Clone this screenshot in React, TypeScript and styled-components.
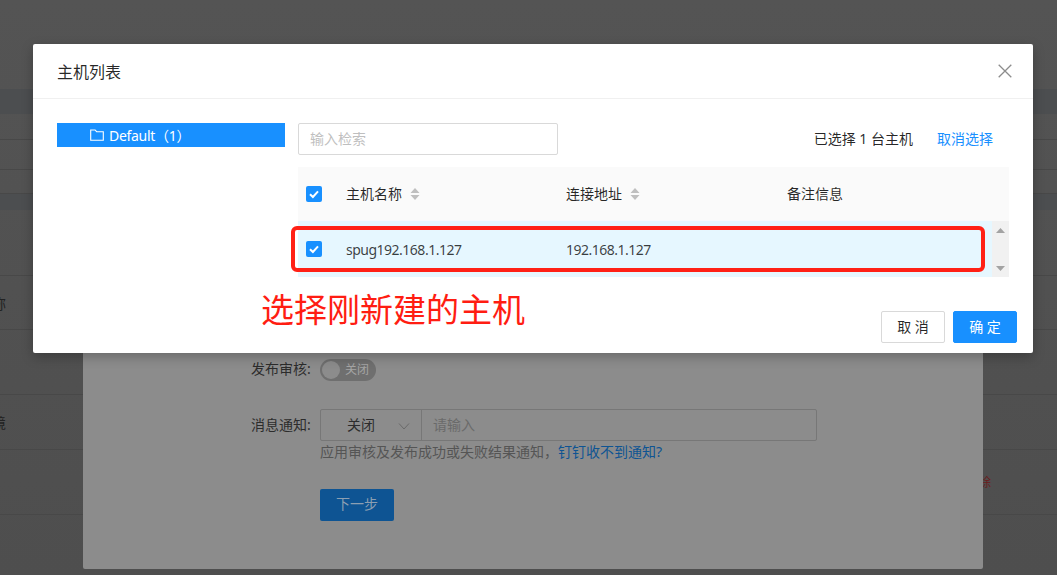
import styled, { createGlobalStyle } from "styled-components";

const Global = createGlobalStyle`
  html, body { margin: 0; padding: 0; background: #505050; }
  * { box-sizing: border-box; }
  body { font-family: "Noto Sans", "Noto Sans CJK SC", sans-serif; font-size: 14px; }
`;

const Page = styled.div`
  position: relative;
  width: 1057px;
  height: 575px;
  overflow: hidden;
  background: linear-gradient(#545454, #4e4e4e);
`;

/* table of the page under both dialogs */
const BackTable = styled.div`
  display: flex;
  flex-direction: column;
  padding-top: 89px;
`;

const BackRow = styled.div<{ $h: number; $band?: boolean }>`
  height: ${(p) => p.$h}px;
  display: flex;
  align-items: center;
  justify-content: space-between;
  font-size: 14px;
  color: #222;
  border-bottom: ${(p) => (p.$band ? "none" : "1px solid #484848")};
  background: ${(p) => (p.$band ? "#4c4e50" : "transparent")};
`;

const BackLabel = styled.span`
  margin-left: -8px;
`;

const BackDanger = styled.span`
  margin-right: 66px;
  font-size: 12px;
  color: #6b1d1d;
`;

const FormCard = styled.div`
  position: absolute;
  left: 83px;
  top: 200px;
  width: 900px;
  height: 369px;
  border-radius: 2px;
  background: #8c8c8c;
  padding: 159px 0 0 168px;
`;

const FormRow = styled.div<{ $mb: number }>`
  display: flex;
  margin-bottom: ${(p) => p.$mb}px;
`;

const FormLabel = styled.label<{ $h: number }>`
  width: 69px;
  height: ${(p) => p.$h}px;
  line-height: ${(p) => p.$h}px;
  color: #2c2c2c;
  white-space: nowrap;
`;

const Toggle = styled.div`
  position: relative;
  width: 56px;
  height: 22px;
  border-radius: 11px;
  background: #6f6f6f;
  color: #a5a5a5;
  font-size: 12px;
  line-height: 22px;
  padding-left: 25px;
  &::before {
    content: "";
    position: absolute;
    left: 2px;
    top: 2px;
    width: 18px;
    height: 18px;
    border-radius: 50%;
    background: #8c8c8c;
  }
`;

const InputGroup = styled.div`
  display: flex;
  width: 497px;
  height: 32px;
  border: 1px solid #777;
  border-radius: 2px;
`;

const GroupSelect = styled.div`
  position: relative;
  width: 101px;
  border-right: 1px solid #777;
  line-height: 30px;
  padding-left: 26px;
  color: #2c2c2c;
  svg {
    position: absolute;
    right: 11px;
    top: 10px;
  }
`;

const GroupInput = styled.div`
  flex: 1;
  padding-left: 11px;
  line-height: 30px;
  color: #6a6a6a;
`;

const FormHint = styled.div`
  height: 22px;
  line-height: 22px;
  color: #555;
  white-space: nowrap;
`;

const FormLink = styled.span`
  color: #0e5493;
`;

const NextButton = styled.div`
  width: 74px;
  height: 32px;
  margin-left: 69px;
  border-radius: 2px;
  background: #0e5493;
  color: #8c9fb2;
  text-align: center;
  line-height: 30px;
`;

const Dialog = styled.div`
  position: absolute;
  left: 33px;
  top: 44px;
  width: 1000px;
  height: 309px;
  display: flex;
  flex-direction: column;
  background: #fff;
  border-radius: 2px;
  box-shadow: 0 4px 12px rgba(0, 0, 0, 0.25);
`;

const DialogHeader = styled.div`
  height: 55px;
  display: flex;
  align-items: center;
  justify-content: space-between;
  padding: 0 21px 0 24px;
  border-bottom: 1px solid #f0f0f0;
`;

const DialogTitle = styled.div`
  font-size: 16px;
  color: rgba(0, 0, 0, 0.85);
`;

const CloseIcon = styled.svg`
  display: block;
  color: #8c8c8c;
`;

const DialogBody = styled.div`
  flex: 1;
  display: flex;
  gap: 13px;
  padding: 24px 24px 24px;
`;

const Tree = styled.div`
  width: 228px;
`;

const TreeNode = styled.div`
  height: 24px;
  display: flex;
  align-items: center;
  gap: 5px;
  padding-left: 33px;
  background: #1890ff;
  color: #fff;
  white-space: nowrap;
  letter-spacing: -0.3px;
`;

const Content = styled.div`
  width: 711px;
`;

const Toolbar = styled.div`
  display: flex;
  align-items: center;
  height: 32px;
  margin-bottom: 12px;
`;

const SearchInput = styled.input`
  width: 260px;
  height: 32px;
  padding: 0 11px 2px;
  border: 1px solid #d9d9d9;
  border-radius: 2px;
  font: inherit;
  outline: none;
  &::placeholder { color: #bfbfbf; }
`;

const Picked = styled.div`
  margin-left: auto;
  padding-bottom: 2px;
  color: rgba(0, 0, 0, 0.85);
`;

const UnselectLink = styled.a`
  margin-left: 24px;
  margin-right: 16px;
  padding-bottom: 2px;
  color: #1890ff;
`;

const HeadRow = styled.div`
  height: 54px;
  display: flex;
  align-items: center;
  background: #fafafa;
  color: rgba(0, 0, 0, 0.85);
`;

const HeadLabel = styled.span`
  margin-top: -2px;
`;

const BodyWrap = styled.div`
  height: 56px;
  display: flex;
`;

const DataRow = styled.div`
  flex: 1;
  display: flex;
  align-items: center;
  background: #e6f7ff;
  color: rgba(0, 0, 0, 0.75);
  letter-spacing: -0.5px;
`;

const CheckCell = styled.div`
  width: 48px;
  padding-left: 8px;
`;

const Cell = styled.div<{ $w?: number }>`
  width: ${(p) => (p.$w ? `${p.$w}px` : "auto")};
  display: flex;
  align-items: center;
  gap: 8px;
  white-space: nowrap;
`;

const Box = styled.span`
  width: 16px;
  height: 16px;
  display: flex;
  align-items: center;
  justify-content: center;
  border-radius: 2px;
  background: #1890ff;
`;

const ScrollBar = styled.div`
  width: 17px;
  display: flex;
  flex-direction: column;
  align-items: center;
  justify-content: space-between;
  padding: 7px 0 6px;
  background: #f1f1f1;
`;

const DialogFooter = styled.div`
  height: 52px;
  display: flex;
  justify-content: flex-end;
  align-items: center;
  gap: 8px;
  padding: 0 16px;
`;

const FootButton = styled.button<{ $primary?: boolean }>`
  width: 64px;
  height: 32px;
  padding: 0 0 2px;
  border-radius: 2px;
  border: 1px solid ${(p) => (p.$primary ? "#1890ff" : "#d9d9d9")};
  background: ${(p) => (p.$primary ? "#1890ff" : "#fff")};
  color: ${(p) => (p.$primary ? "#fff" : "rgba(0,0,0,.85)")};
  font: inherit;
`;

/* red markup drawn on the screenshot */
const MarkBox = styled.div`
  position: absolute;
  left: 291px;
  top: 226px;
  width: 694px;
  height: 46px;
  border: 4px solid #ff2116;
  border-radius: 6px;
`;

const MarkText = styled.div`
  position: absolute;
  left: 261px;
  top: 286px;
  font-size: 33px;
  line-height: 48px;
  color: #ff1d12;
  white-space: nowrap;
`;

function Check() {
  return (
    <Box>
      <svg width="12" height="12" viewBox="0 0 12 12">
        <path d="M2 6.2 4.9 9 10 3.4" fill="none" stroke="#fff" strokeWidth="2" />
      </svg>
    </Box>
  );
}

function Sorter() {
  return (
    <svg width="10" height="14" viewBox="0 0 10 14">
      <path d="M5 1 9.5 6H.5z M.5 8h9L5 13z" fill="#bfbfbf" />
    </svg>
  );
}

function Arrow({ up }: { up?: boolean }) {
  return (
    <svg width="9" height="5" viewBox="0 0 9 5">
      <path d={up ? "M4.5 0 9 5H0z" : "M0 0h9L4.5 5z"} fill="#a3a3a3" />
    </svg>
  );
}

export default function App() {
  return (
    <Page>
      <Global />
      <BackTable>
        <BackRow $h={25} $band />
        <BackRow $h={26} />
        <BackRow $h={30} />
        <BackRow $h={24} />
        <BackRow $h={16} $band />
        <BackRow $h={66} />
        <BackRow $h={54}><BackLabel>称</BackLabel></BackRow>
        <BackRow $h={65} />
        <BackRow $h={55}><BackLabel>境</BackLabel></BackRow>
        <BackRow $h={65}>
          <span />
          <BackDanger>删除</BackDanger>
        </BackRow>
      </BackTable>

      <FormCard>
        <FormRow $mb={28}>
          <FormLabel $h={20}>发布审核:</FormLabel>
          <Toggle>关闭</Toggle>
        </FormRow>
        <FormRow $mb={0}>
          <FormLabel $h={32}>消息通知:</FormLabel>
          <InputGroup>
            <GroupSelect>
              关闭
              <svg width="12" height="12" viewBox="0 0 12 12">
                <path d="M1 3.5 6 9l5-5.5" fill="none" stroke="#6a6a6a" />
              </svg>
            </GroupSelect>
            <GroupInput>请输入</GroupInput>
          </InputGroup>
        </FormRow>
        <FormRow $mb={26}>
          <FormLabel $h={22} />
          <FormHint>
            应用审核及发布成功或失败结果通知，<FormLink>钉钉收不到通知?</FormLink>
          </FormHint>
        </FormRow>
        <NextButton>下一步</NextButton>
      </FormCard>

      <Dialog>
        <DialogHeader>
          <DialogTitle>主机列表</DialogTitle>
          <CloseIcon width="14" height="14" viewBox="0 0 14 14">
            <path d="M.7.7l12.6 12.6M13.3.7.7 13.3" stroke="currentColor" strokeWidth="1.3" />
          </CloseIcon>
        </DialogHeader>
        <DialogBody>
          <Tree>
            <TreeNode>
              <svg width="14" height="12" viewBox="0 0 14 12">
                <path d="M.7 1h4.4l1.5 1.7h6.7v8.6H.7z" fill="none" stroke="#fff" strokeWidth="1.1" />
              </svg>
              Default（1）
            </TreeNode>
          </Tree>
          <Content>
            <Toolbar>
              <SearchInput placeholder="输入检索" readOnly />
              <Picked>已选择 1 台主机</Picked>
              <UnselectLink>取消选择</UnselectLink>
            </Toolbar>
            <HeadRow>
              <CheckCell><Check /></CheckCell>
              <Cell $w={220}><HeadLabel>主机名称</HeadLabel> <Sorter /></Cell>
              <Cell $w={221}><HeadLabel>连接地址</HeadLabel> <Sorter /></Cell>
              <Cell><HeadLabel>备注信息</HeadLabel></Cell>
            </HeadRow>
            <BodyWrap>
              <DataRow>
                <CheckCell><Check /></CheckCell>
                <Cell $w={220}>spug192.168.1.127</Cell>
                <Cell>192.168.1.127</Cell>
              </DataRow>
              <ScrollBar>
                <Arrow up />
                <Arrow />
              </ScrollBar>
            </BodyWrap>
          </Content>
        </DialogBody>
        <DialogFooter>
          <FootButton>取 消</FootButton>
          <FootButton $primary>确 定</FootButton>
        </DialogFooter>
      </Dialog>

      <MarkBox />
      <MarkText>选择刚新建的主机</MarkText>
    </Page>
  );
}
